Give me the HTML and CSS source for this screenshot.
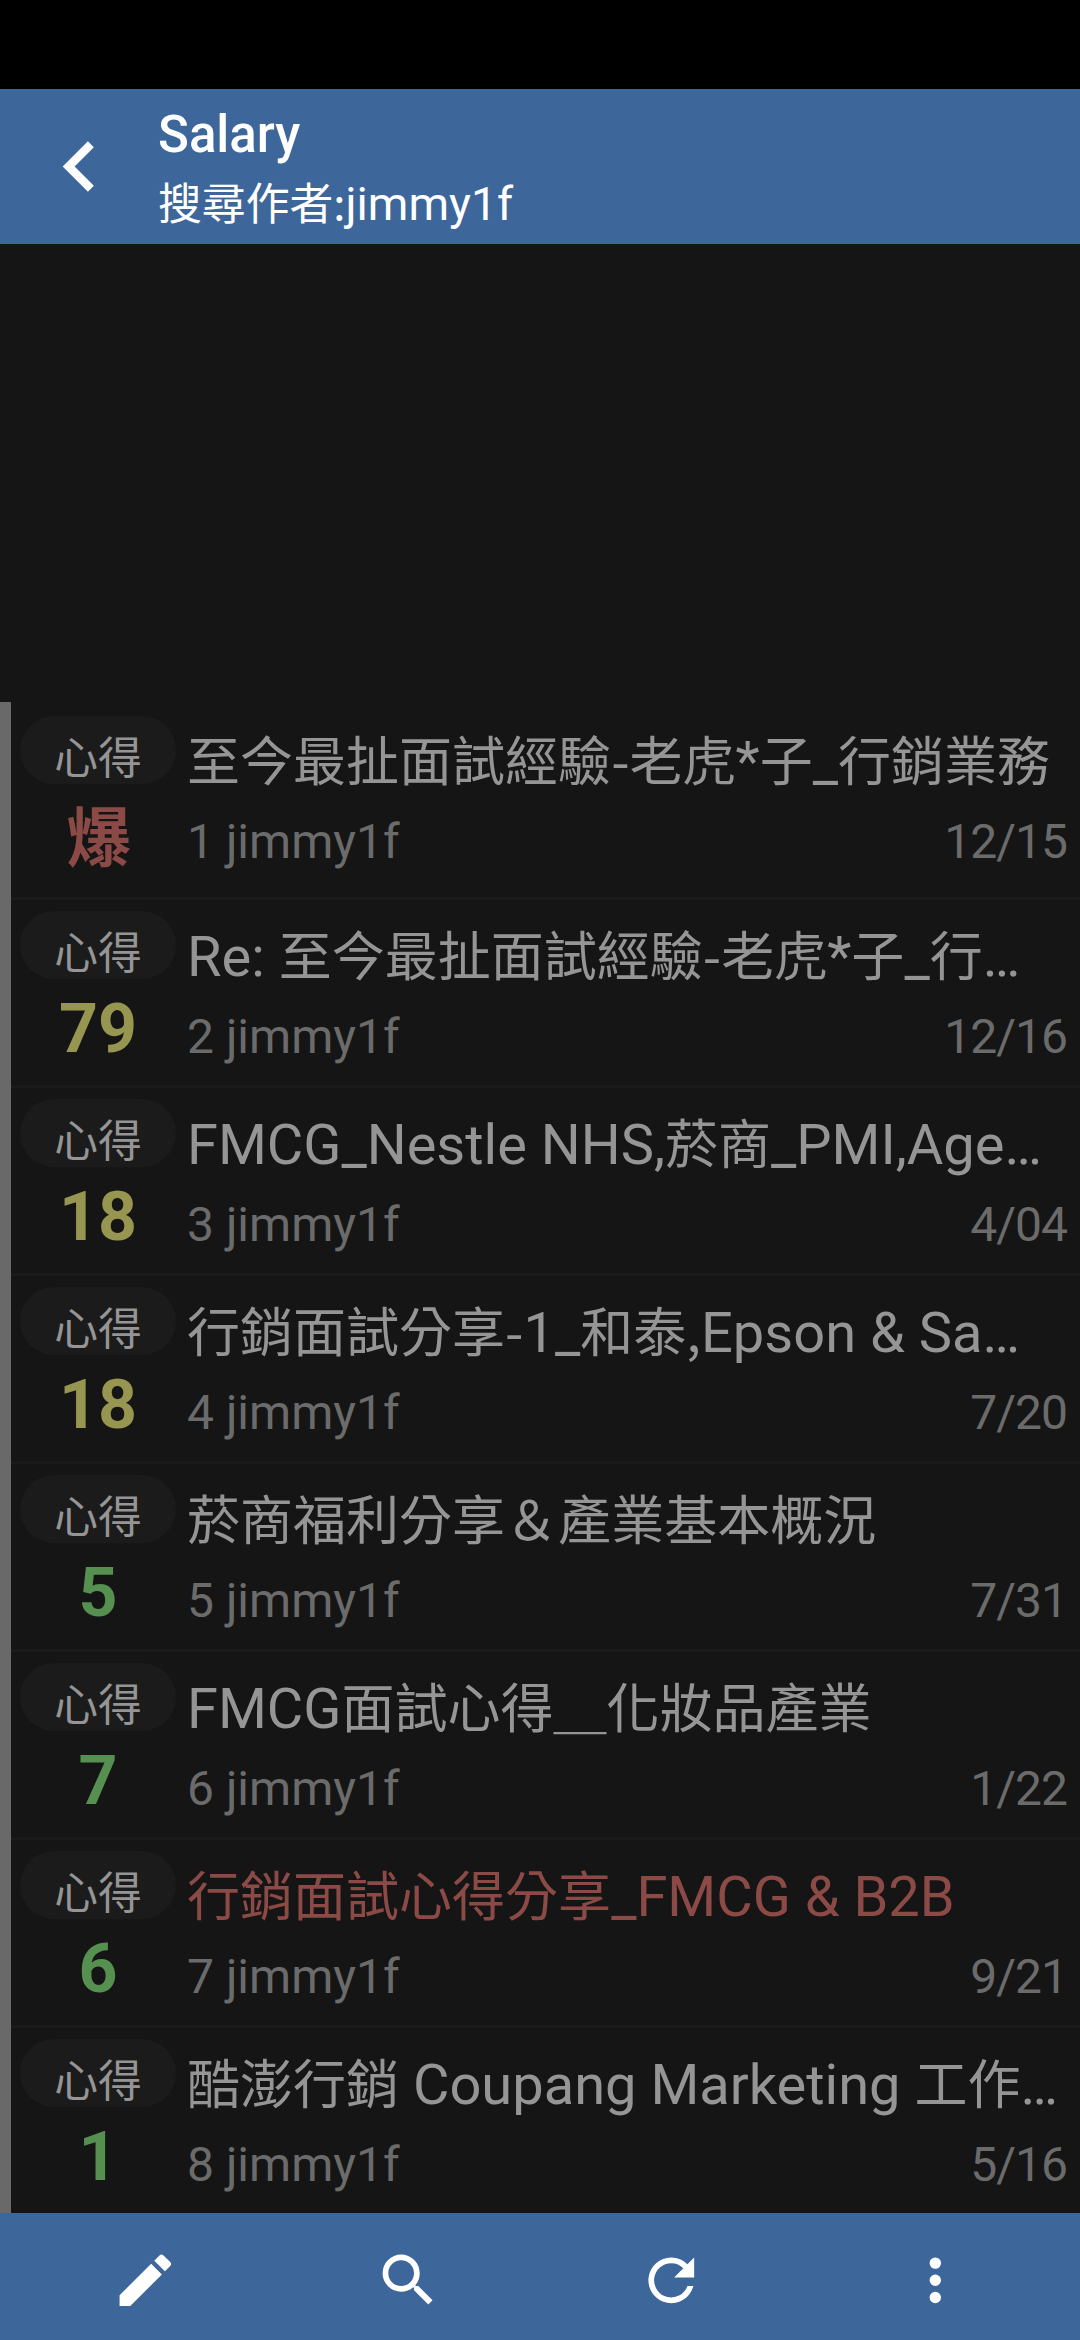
FILE: index.html
```html
<!DOCTYPE html>
<html lang="zh-Hant">
<head>
<meta charset="utf-8">
<title>Salary</title>
<link rel="stylesheet" href="styles.css">
</head>
<body>
<div class="screen">
  <div class="status-bar"></div>
  <header class="app-bar">
    <svg class="back" viewBox="0 0 24 24"><path d="M15.41 7.41 14 6l-6 6 6 6 1.41-1.41L10.83 12z"/></svg>
    <div class="heading">
      <h1 class="board">Salary</h1>
      <p class="query"><span class="han">搜尋作者:</span>jimmy1f</p>
    </div>
  </header>
  <main class="content">
    <ul class="posts">
      <li class="post">
        <div class="side"><span class="tag"><span class="han">心得</span></span><b class="count burst hot"><span class="han">爆</span></b></div>
        <div class="body"><h2 class="title"><span class="han">至今最扯面試經驗-老虎</span>*<span class="han">子</span>_<span class="han">行銷業務</span></h2><p class="meta"><span>1 jimmy1f</span><span class="date">12/15</span></p></div>
      </li>
      <li class="post">
        <div class="side"><span class="tag"><span class="han">心得</span></span><b class="count warm">79</b></div>
        <div class="body"><h2 class="title">Re: <span class="han">至今最扯面試經驗-老虎</span>*<span class="han">子</span>_<span class="han">行</span>…</h2><p class="meta"><span>2 jimmy1f</span><span class="date">12/16</span></p></div>
      </li>
      <li class="post">
        <div class="side"><span class="tag"><span class="han">心得</span></span><b class="count warm">18</b></div>
        <div class="body"><h2 class="title">FMCG_Nestle NHS,<span class="han">菸商</span>_PMI,Age…</h2><p class="meta"><span>3 jimmy1f</span><span class="date">4/04</span></p></div>
      </li>
      <li class="post">
        <div class="side"><span class="tag"><span class="han">心得</span></span><b class="count warm">18</b></div>
        <div class="body"><h2 class="title"><span class="han">行銷面試分享-</span>1_<span class="han">和泰,</span>Epson &amp; Sa…</h2><p class="meta"><span>4 jimmy1f</span><span class="date">7/20</span></p></div>
      </li>
      <li class="post">
        <div class="side"><span class="tag"><span class="han">心得</span></span><b class="count low">5</b></div>
        <div class="body"><h2 class="title"><span class="han">菸商福利分享＆產業基本概況</span></h2><p class="meta"><span>5 jimmy1f</span><span class="date">7/31</span></p></div>
      </li>
      <li class="post">
        <div class="side"><span class="tag"><span class="han">心得</span></span><b class="count low">7</b></div>
        <div class="body"><h2 class="title">FMCG<span class="han">面試心得＿化妝品產業</span></h2><p class="meta"><span>6 jimmy1f</span><span class="date">1/22</span></p></div>
      </li>
      <li class="post">
        <div class="side"><span class="tag"><span class="han">心得</span></span><b class="count low">6</b></div>
        <div class="body"><h2 class="title hot"><span class="han">行銷面試心得分享</span>_FMCG &amp; B2B</h2><p class="meta"><span>7 jimmy1f</span><span class="date">9/21</span></p></div>
      </li>
      <li class="post">
        <div class="side"><span class="tag"><span class="han">心得</span></span><b class="count low">1</b></div>
        <div class="body"><h2 class="title"><span class="han">酷澎行銷</span> Coupang Marketing <span class="han">工作</span>…</h2><p class="meta"><span>8 jimmy1f</span><span class="date">5/16</span></p></div>
      </li>
    </ul>
  </main>
  <nav class="toolbar">
    <svg class="icon" viewBox="0 0 24 24"><path d="M3 17.25V21h3.75L17.81 9.94l-3.75-3.75L3 17.25zM20.71 7.04a1 1 0 0 0 0-1.41l-2.34-2.34a1 1 0 0 0-1.41 0l-1.83 1.83 3.75 3.75 1.83-1.83z"/></svg>
    <svg class="icon" viewBox="0 0 24 24"><path d="M15.5 14h-.79l-.28-.27A6.47 6.47 0 0 0 16 9.5 6.5 6.5 0 1 0 9.5 16c1.61 0 3.09-.59 4.23-1.57l.27.28v.79l5 4.99L20.49 19l-4.99-5zm-6 0C7.01 14 5 11.99 5 9.5S7.01 5 9.5 5 14 7.01 14 9.5 11.99 14 9.5 14z"/></svg>
    <svg class="icon" viewBox="0 0 24 24"><path d="M17.65 6.35A7.96 7.96 0 0 0 12 4a8 8 0 1 0 7.73 10h-2.08A6 6 0 1 1 12 6c1.66 0 3.14.69 4.22 1.78L13 11h7V4l-2.35 2.35z"/></svg>
    <svg class="icon" viewBox="0 0 24 24"><path d="M12 8a2 2 0 1 0 0-4 2 2 0 0 0 0 4zm0 2a2 2 0 1 0 0 4 2 2 0 0 0 0-4zm0 6a2 2 0 1 0 0 4 2 2 0 0 0 0-4z"/></svg>
  </nav>
</div>
</body>
</html>
```
FILE: styles.css
```css
* {
  box-sizing: border-box;
  margin: 0;
  padding: 0;
}

body {
  background: #151515;
  font-family: Roboto, "Noto Sans CJK TC", sans-serif;
  font-weight: 400;
}

.screen {
  display: flex;
  flex-direction: column;
  width: 1080px;
  height: 2340px;
  overflow: hidden;
}

.status-bar {
  flex: none;
  height: 89px;
  background: #000;
}

.app-bar {
  flex: none;
  display: flex;
  align-items: center;
  height: 155px;
  padding-left: 29px;
  background: #3d669b;
  color: #fff;
}

.back {
  width: 101px;
  height: 101px;
  fill: #fff;
}

.heading {
  margin-left: 28px;
  white-space: nowrap;
}

.board {
  height: 69px;
  line-height: 73px;
  font-size: 51px;
  font-weight: 500;
}

.query {
  height: 68px;
  line-height: 74px;
  font-size: 46.3px;
}

/* Han glyphs run slightly smaller than the Latin text around them */
.han {
  font-family: "Noto Sans CJK TC", sans-serif;
  font-size: 0.947em;
  line-height: 1;
}

.content {
  flex: 1;
  display: flex;
  flex-direction: column;
  justify-content: flex-end;
}

.posts {
  list-style: none;
  border-left: 11px solid #696969;
}

.post {
  display: flex;
  height: 188px;
  padding: 11px 13px 0 9px;
  border-top: 3px solid #1b1b1b;
}

.post:first-child {
  height: 195px;
  border-top-color: transparent;
}

.side {
  flex: none;
  display: flex;
  flex-direction: column;
  align-items: center;
  width: 156px;
}

.tag {
  width: 156px;
  height: 68px;
  border-radius: 34px;
  background: #1b1b1b;
  color: #959595;
  font-size: 46.3px;
  line-height: 84px;
  text-align: center;
}

.count {
  height: 80px;
  line-height: 100px;
  font-size: 68px;
  font-weight: 700;
}

.burst {
  padding-left: 2px;
  line-height: 109px;
}

.body {
  flex: 1;
  min-width: 0;
  margin-left: 11px;
  white-space: nowrap;
}

.title {
  height: 85px;
  line-height: 92px;
  font-size: 56px;
  font-weight: 400;
  color: #959595;
}

.meta {
  display: flex;
  justify-content: space-between;
  line-height: 81px;
  font-size: 48px;
  color: #6b6b6b;
}

.date {
  letter-spacing: -1px;
}

.hot {
  color: #8c4a47;
}

.warm {
  color: #969650;
}

.low {
  color: #569050;
}

.toolbar {
  flex: none;
  display: grid;
  grid-template-columns: repeat(4, 1fr);
  justify-items: center;
  height: 127px;
  padding: 33px 13.5px 0;
  background: #3d669b;
}

.icon {
  width: 68.6px;
  height: 68.6px;
  fill: #fff;
}
```
